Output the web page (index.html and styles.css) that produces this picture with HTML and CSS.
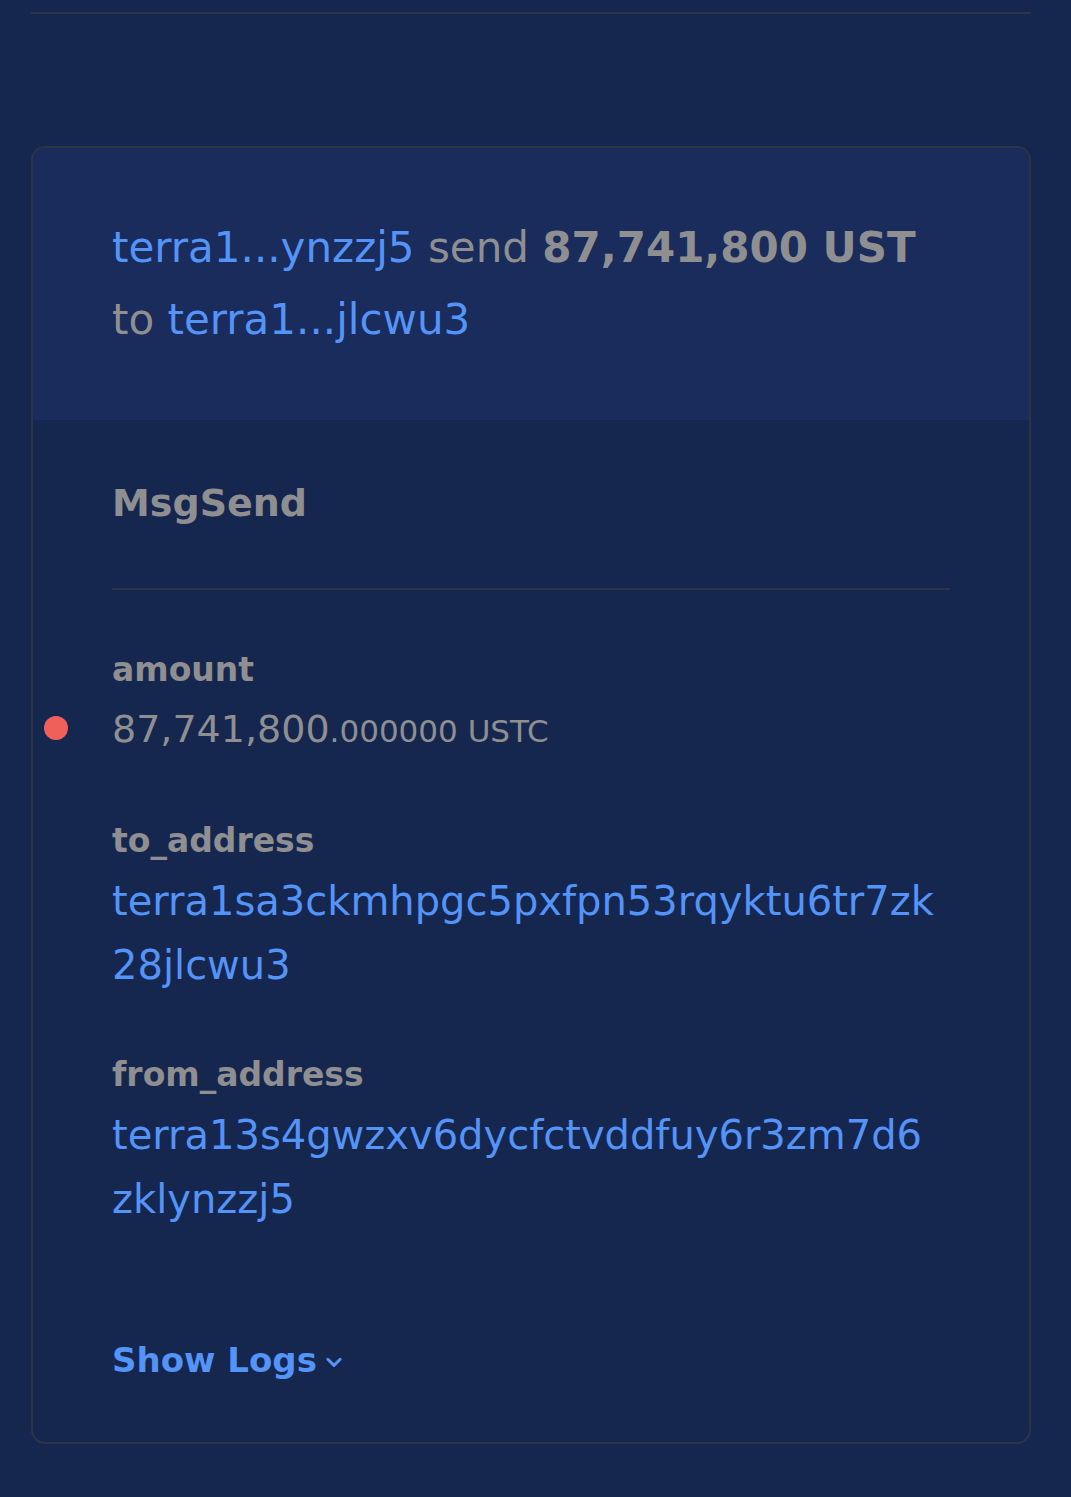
FILE: index.html
```html
<!DOCTYPE html>
<html lang="en">
<head>
<meta charset="utf-8">
<title>Tx</title>
<link rel="stylesheet" href="styles.css">
</head>
<body>
<div class="page">
  <div class="topline"></div>
  <div class="card">
    <div class="card-head">
      <p class="summary"><a class="link">terra1...ynzzj5</a> send <strong>87,741,800 UST</strong> to <a class="link">terra1...jlcwu3</a></p>
    </div>
    <div class="card-body">
      <h2 class="msg-title">MsgSend</h2>
      <div class="fields">
        <div class="field">
          <div class="label">amount</div>
          <div class="value amount"><span class="dot"></span>87,741,800<span class="small">.000000 USTC</span></div>
        </div>
        <div class="field">
          <div class="label">to_address</div>
          <div class="value addr">terra1sa3ckmhpgc5pxfpn53rqyktu6tr7zk<wbr>28jlcwu3</div>
        </div>
        <div class="field">
          <div class="label">from_address</div>
          <div class="value addr">terra13s4gwzxv6dycfctvddfuy6r3zm7d6<wbr>zklynzzj5</div>
        </div>
      </div>
      <button class="logs">Show Logs<svg class="chev" viewBox="0 0 16 16" width="22" height="22"><path d="M3.5 6l4.5 4.5L12.5 6" fill="none" stroke="currentColor" stroke-width="2.2" stroke-linecap="round" stroke-linejoin="round"/></svg></button>
    </div>
  </div>
</div>
</body>
</html>
```
FILE: styles.css
```css
html, body {
  margin: 0;
  padding: 0;
  background: #16274f;
}
body {
  font-family: "DejaVu Sans", "Noto Sans", sans-serif;
  color: #8f8f92;
}
.page {
  margin-left: 31px;
  width: 1000px;
  padding-bottom: 55px;
}
.topline {
  height: 2px;
  margin-top: 12px;
  background: #2c3548;
}
.card {
  margin-top: 132px;
  border: 2px solid #2c3548;
  border-radius: 14px;
  overflow: hidden;
}
.card-head {
  background: #1a2c5b;
  padding: 64px 79px;
}
.summary {
  margin: 0;
  font-size: 42px;
  line-height: 72px;
}
.summary strong {
  font-weight: 700;
}
.link {
  color: #5493f7;
  text-decoration: none;
}
.card-body {
  padding: 0 79px 54px;
}
.msg-title {
  margin: 0;
  padding: 51px 0 53px;
  border-bottom: 2px solid #2c3548;
  font-size: 38px;
  line-height: 64px;
  font-weight: 700;
}
.fields {
  display: flex;
  flex-direction: column;
  gap: 50px;
  padding-top: 52px;
}
.label {
  font-size: 33px;
  line-height: 56px;
  font-weight: 700;
}
.value {
  font-size: 40px;
  line-height: 64px;
}
.amount {
  position: relative;
  font-size: 38px;
  line-height: 63px;
}
.small {
  font-size: 31px;
}
.dot {
  position: absolute;
  left: -68px;
  top: 18px;
  width: 24px;
  height: 24px;
  border-radius: 50%;
  background: #f0605a;
}
.addr {
  color: #5493f7;
  word-break: normal;
  overflow-wrap: anywhere;
}
.logs {
  margin-top: 101px;
  padding: 0;
  border: 0;
  background: none;
  font-family: inherit;
  font-size: 34px;
  line-height: 56px;
  font-weight: 700;
  color: #5493f7;
  display: flex;
  align-items: center;
  gap: 6px;
}
.chev {
  margin-top: 4px;
}
```
